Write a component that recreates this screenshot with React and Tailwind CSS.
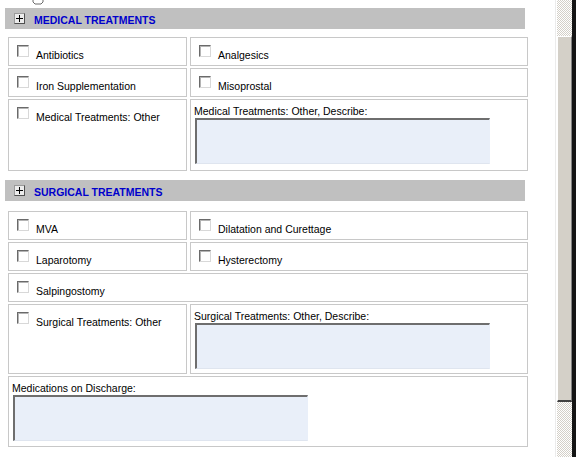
import React from 'react';

const font = "font-['Liberation_Sans',Arial,sans-serif]";

function Checkbox() {
  return (
    <div className="w-[12px] h-[12px] shrink-0 bg-white border border-t-[#6a6a6a] border-l-[#6a6a6a] border-r-[#d8d8d8] border-b-[#d8d8d8] shadow-[inset_1px_1px_0_#b4b4b4]" />
  );
}

function CheckCell({ label, span, h = 'h-[29px]' }) {
  return (
    <div className={`border border-[#c8c8c8] bg-white flex items-start pl-[8px] pt-[7px] ${span ? 'col-span-2' : ''} ${h}`}>
      <Checkbox />
      <span className="ml-[7px] mt-[4px] text-[10.5px] leading-[12px] text-black whitespace-nowrap">{label}</span>
    </div>
  );
}

function TextCell({ label, span, h }) {
  return (
    <div className={`border border-[#c8c8c8] bg-white flex flex-col pl-[3px] pt-[5px] ${span ? 'col-span-2' : ''} ${h}`}>
      <span className="text-[10.5px] leading-[12px] text-black whitespace-nowrap">{label}</span>
      <textarea
        readOnly
        className="block mt-[1px] ml-[1px] w-[295px] h-[46px] resize-none outline-none bg-[#e9eff9] border-t-2 border-l-2 border-r border-b border-t-[#6e6e6e] border-l-[#6e6e6e] border-r-[#e9eff9] border-b-[#dfe5ef]"
      />
    </div>
  );
}

function SectionHeader({ title }) {
  return (
    <div className="ml-[5px] w-[520px] h-[21px] bg-[#c0c0c0] flex items-start pl-[9px]">
      <div className="mt-[5px] w-[11px] h-[11px] shrink-0 bg-[#ececec] border border-t-[#9a9a9a] border-l-[#9a9a9a] border-r-[#505050] border-b-[#505050] flex items-center justify-center">
        <svg width="7" height="7" viewBox="0 0 7 7">
          <path d="M0 3.5H7M3.5 0V7" stroke="#000" strokeWidth="1" />
        </svg>
      </div>
      <span className="ml-[9px] mt-[6px] text-[10.5px] leading-[12px] font-bold text-[#0000cc] whitespace-nowrap">{title}</span>
    </div>
  );
}

const checker = "bg-[repeating-conic-gradient(#d4d0c8_0_25%,#ffffff_0_50%)] bg-[length:2px_2px]";

export default function App() {
  return (
    <div className={`w-[576px] h-[457px] overflow-hidden bg-white flex ${font}`}>
      <div className="w-[555px] shrink-0 flex flex-col">
        <div className="h-[8px] pl-[32px]">
          <svg width="12" height="5" viewBox="0 0 12 5">
            <path d="M1 0V2L3 4H9L11 2V0" fill="none" stroke="#6a6a6a" strokeWidth="1" />
          </svg>
        </div>

        <SectionHeader title="MEDICAL TREATMENTS" />
        <div className="ml-[8px] mt-[8px] w-[520px] grid grid-cols-[179px_1fr] gap-x-[3px] gap-y-[2px]">
          <CheckCell label="Antibiotics" />
          <CheckCell label="Analgesics" />
          <CheckCell label="Iron Supplementation" />
          <CheckCell label="Misoprostal" />
          <CheckCell label="Medical Treatments: Other" h="h-[72px]" />
          <TextCell label="Medical Treatments: Other, Describe:" h="h-[72px]" />
        </div>

        <div className="mt-[9px]">
          <SectionHeader title="SURGICAL TREATMENTS" />
        </div>
        <div className="ml-[8px] mt-[10px] w-[520px] grid grid-cols-[179px_1fr] gap-x-[3px] gap-y-[2px]">
          <CheckCell label="MVA" />
          <CheckCell label="Dilatation and Curettage" />
          <CheckCell label="Laparotomy" />
          <CheckCell label="Hysterectomy" />
          <CheckCell label="Salpingostomy" span />
          <CheckCell label="Surgical Treatments: Other" h="h-[70px]" />
          <TextCell label="Surgical Treatments: Other, Describe:" h="h-[70px]" />
          <TextCell label="Medications on Discharge:" span h="h-[71px]" />
        </div>
      </div>

      <div className="w-[2px] shrink-0 bg-white border-l border-l-[#ececec]" />
      <div className="w-[15px] shrink-0 flex flex-col">
        <div className={`h-[36px] ${checker}`} />
        <div className="h-[366px] bg-[#d4d0c8] border-t border-t-white border-l border-l-white border-r border-r-[#808080] border-b-2 border-b-[#404040]" />
        <div className={`flex-1 ${checker}`} />
      </div>
      <div className="w-[4px] shrink-0 bg-[#141414]" />
    </div>
  );
}
